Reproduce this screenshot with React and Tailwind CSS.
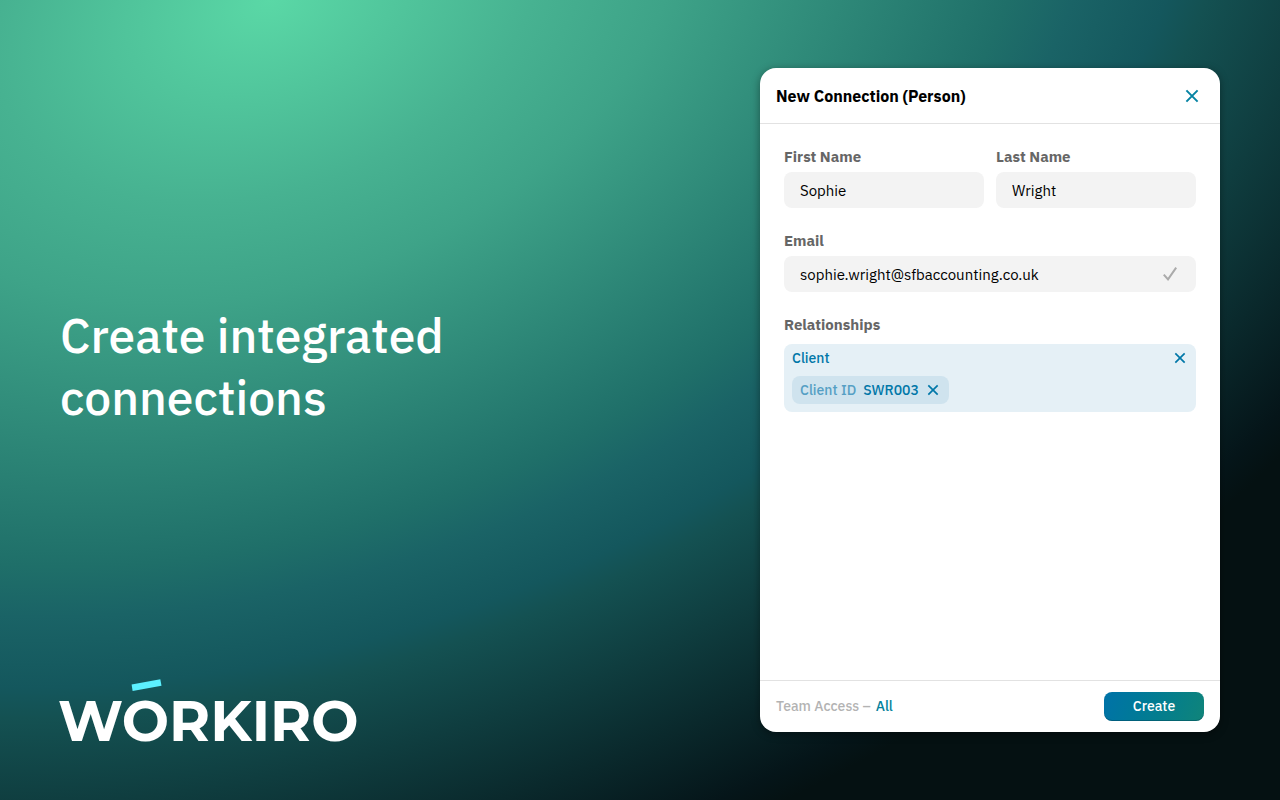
import React from "react";

function Backdrop() {
  return (
    <svg
      className="absolute inset-0 h-full w-full"
      viewBox="0 0 1280 800"
      preserveAspectRatio="xMidYMid slice"
      aria-hidden="true"
    >
      <defs>
        <radialGradient
          id="glow"
          gradientUnits="userSpaceOnUse"
          cx="0"
          cy="0"
          r="1"
          gradientTransform="translate(270 0) rotate(-20.6) scale(1417 940)"
        >
          <stop offset="0" stopColor="#5ad8a6" />
          <stop offset="0.2" stopColor="#47b291" />
          <stop offset="0.3" stopColor="#3ea388" />
          <stop offset="0.56" stopColor="#1f6f69" />
          <stop offset="0.61" stopColor="#1a6366" />
          <stop offset="0.68" stopColor="#14575d" />
          <stop offset="0.71" stopColor="#145152" />
          <stop offset="0.97" stopColor="#051519" />
          <stop offset="1" stopColor="#051112" />
        </radialGradient>
      </defs>
      <rect width="1280" height="800" fill="url(#glow)" />
    </svg>
  );
}

function Cross({ className }) {
  return (
    <svg className={className} viewBox="0 0 12 12" fill="none" stroke="currentColor" aria-hidden="true">
      <path d="M0.4 0.4 11.6 11.6M11.6 0.4 0.4 11.6" />
    </svg>
  );
}

function Field({ id, label, type = "text", value, children }) {
  return (
    <div className="flex min-w-0 flex-1 flex-col gap-[3px]">
      <label htmlFor={id} className="text-[15px] leading-6 font-bold text-[#666]">
        {label}
      </label>
      <div className="flex h-9 items-center rounded-lg bg-[#f3f3f3] px-4">
        <input
          id={id}
          type={type}
          defaultValue={value}
          className="min-w-0 flex-1 bg-transparent pt-0.5 text-[15px] leading-6 text-black outline-none"
        />
        {children}
      </div>
    </div>
  );
}

function Logo() {
  return (
    <div className="-ml-0.5 flex h-[84px] flex-col items-start">
      <svg className="mt-3 ml-[73px] h-[14px] w-8 shrink-0" viewBox="0 0 32 14" aria-hidden="true">
        <path d="M0.6 6.5 29.3 1.2 30.5 7.7 1.6 13Z" fill="#5cf0ff" />
      </svg>
      <span className="font-[Montserrat,Inter,sans-serif] text-[56px] leading-[58px] font-bold">WORKIRO</span>
    </div>
  );
}

export default function App() {
  return (
    <main className="relative isolate flex min-h-screen overflow-hidden bg-[#051112] font-['IBM_Plex_Sans',Roboto,sans-serif]">
      <Backdrop />
      <section className="relative flex flex-1 flex-col pt-[66px] pr-10 pb-[50px] pl-[60px] text-white">
        <div className="flex flex-1 items-center">
          <h1 className="max-w-[440px] text-5xl leading-[62px] font-medium">Create integrated connections</h1>
        </div>
        <Logo />
      </section>

      <form
        className="relative my-[68px] mr-[60px] flex w-[460px] shrink-0 flex-col rounded-2xl bg-white shadow-[0_2px_8px_rgba(0,0,0,0.4)]"
        onSubmit={(e) => e.preventDefault()}
      >
        <header className="flex h-14 items-center justify-between border-b border-[#e2e2e2] pr-5 pl-4">
          <h2 className="pt-px text-base leading-6 font-bold text-black">New Connection (Person)</h2>
          <button type="button" aria-label="Close" className="flex size-4 items-center justify-center text-[#0583a3]">
            <Cross className="size-3 overflow-visible stroke-2" />
          </button>
        </header>

        <div className="flex flex-1 flex-col gap-[21px] px-6 py-[21px]">
          <div className="flex gap-3">
            <Field id="first-name" label="First Name" value="Sophie" />
            <Field id="last-name" label="Last Name" value="Wright" />
          </div>
          <div className="flex">
            <Field id="email" label="Email" type="email" value="sophie.wright@sfbaccounting.co.uk">
              <svg
                className="mr-[3px] size-[14px] shrink-0 text-[#aaa]"
                viewBox="0 0 14 14"
                fill="none"
                stroke="currentColor"
                strokeWidth="2"
                aria-hidden="true"
              >
                <path d="M0.8 7.6 5 12.4 13.2 0.6" />
              </svg>
            </Field>
          </div>
          <div className="flex flex-col gap-[7px]">
            <h3 className="text-[15px] leading-6 font-bold text-[#666]">Relationships</h3>
            <div className="flex flex-col items-start gap-1 rounded-lg bg-[#e5f0f6] px-2 pb-2 text-sm font-medium text-[#0077a8]">
              <div className="flex h-7 w-full items-center justify-between">
                <span>Client</span>
                <button type="button" aria-label="Remove client" className="flex size-4 items-center justify-center">
                  <Cross className="size-[10px] overflow-visible stroke-2" />
                </button>
              </div>
              <div className="flex h-7 items-center rounded-lg bg-[#cfe3ee] px-2">
                <span className="text-[#559fc4]">Client ID</span>
                <span className="mr-1.5 ml-[7px]">SWR003</span>
                <button type="button" aria-label="Remove client ID" className="flex size-4 items-center justify-center">
                  <Cross className="size-[10px] overflow-visible stroke-2" />
                </button>
              </div>
            </div>
          </div>
        </div>

        <footer className="flex h-[52px] items-center justify-between border-t border-[#e2e2e2] px-4 text-sm font-medium">
          <p className="flex gap-[5px] pb-px text-[#b3b3b3]">
            Team Access – <a href="#team-access" className="text-[#05829c]">All</a>
          </p>
          <button
            type="submit"
            className="h-[29px] w-[100px] rounded-lg bg-linear-110 from-[#0072a8] to-[#108479] pb-px text-white shadow-[inset_0_-1px_0_rgba(0,60,80,0.4)]"
          >
            Create
          </button>
        </footer>
      </form>
    </main>
  );
}
